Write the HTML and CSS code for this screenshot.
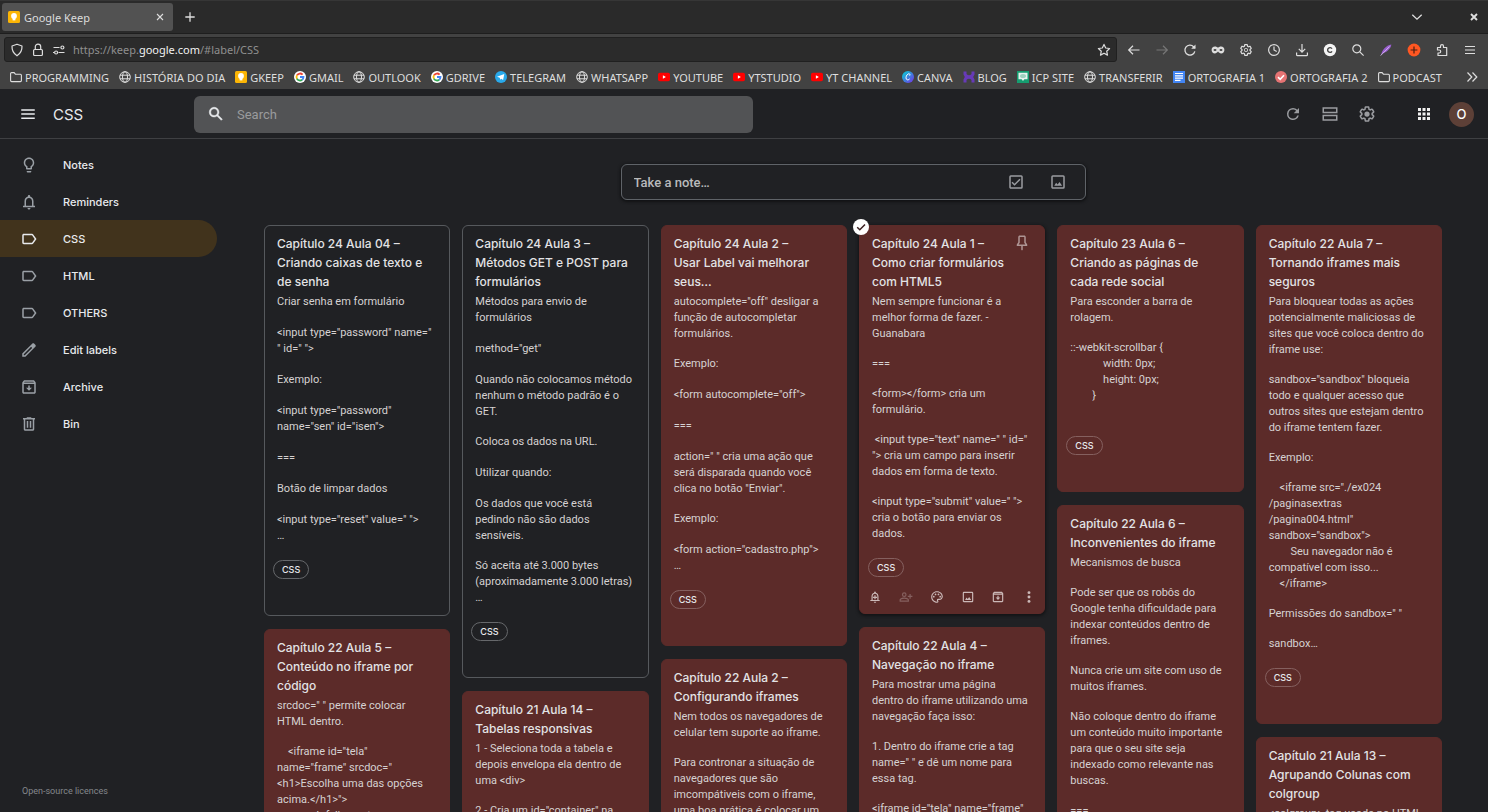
FILE: index.html
```html
<!DOCTYPE html>
<html lang="en">
<head>
<meta charset="utf-8">
<title>Google Keep</title>
<link rel="stylesheet" href="styles.css">
</head>
<body>
<svg class="sprite" aria-hidden="true">
  <symbol id="i-keep" viewBox="0 0 12 12"><rect width="12" height="12" rx="1.5" fill="#fbb505"/><circle cx="6" cy="5" r="2.9" fill="#fff"/><path d="M4.6 7h2.8v2.4H4.6z" fill="#fff"/></symbol>
  <symbol id="i-globe" viewBox="0 0 12 12"><g fill="none" stroke="currentColor"><circle cx="6" cy="6" r="5.3"/><ellipse cx="6" cy="6" rx="2.5" ry="5.3"/><path d="M1 4.2h10M1 7.8h10"/></g></symbol>
  <symbol id="i-folder" viewBox="0 0 12 12"><path d="M.6 9.6v-7q0-1 1-1h2.5l1.3 1.6h5q1 0 1 1v5.4q0 1-1 1H1.6q-1 0-1-1z" fill="none" stroke="currentColor" stroke-width="1.1"/></symbol>
  <symbol id="i-google" viewBox="0 0 12 12"><circle cx="6" cy="6" r="6" fill="#fff"/><g fill="none" stroke-width="1.8"><path d="M8.6 3.6A3.5 3.5 0 0 0 3 4.3" stroke="#ea4335"/><path d="M3 4.2a3.5 3.5 0 0 0 0 3.6" stroke="#fbbc05"/><path d="M2.9 7.6a3.5 3.5 0 0 0 5.3 1.1" stroke="#34a853"/><path d="M8.1 8.8A3.4 3.4 0 0 0 9.5 6H6" stroke="#4285f4"/></g></symbol>
  <symbol id="i-telegram" viewBox="0 0 12 12"><circle cx="6" cy="6" r="6" fill="#29a9ea"/><path d="M2 5.8 9.3 3 8.1 9 6.2 7.7l-1 1-.4-2z" fill="#fff"/></symbol>
  <symbol id="i-youtube" viewBox="0 0 12 12"><rect y="1.8" width="12" height="8.4" rx="1.8" fill="#f00"/><path d="m4.9 4.2 3 1.8-3 1.8z" fill="#fff"/></symbol>
  <symbol id="i-canva" viewBox="0 0 12 12"><defs><linearGradient id="cv" x1="0" y1="0" x2="1" y2="1"><stop offset=".2" stop-color="#17b8d8"/><stop offset="1" stop-color="#7a2be8"/></linearGradient></defs><circle cx="6" cy="6" r="6" fill="url(#cv)"/><path d="M7.7 4.6c.8-1.2-.2-2.2-1.4-1.7C4.5 3.6 3.5 6.5 4.3 8.1c.7 1.3 2.4.9 3.4-.3" fill="none" stroke="#fff" stroke-width="1"/></symbol>
  <symbol id="i-blog" viewBox="0 0 12 12"><path d="M.5.5h3v2.400c1.300 1.700 3.700 1.700 5 0V.5h3v3L10.200 6l1.300 2.500v3h-3V9.100c-1.300-1.700-3.700-1.700-5 0v2.400h-3v-3L1.800 6 .5 3.500z" fill="#673ab7"/></symbol>
  <symbol id="i-icp" viewBox="0 0 12 12"><path d="M0 0h12v12H0z" fill="#159d70"/><path d="M1.5 1.800h9v6.400H7.400L6 10 4.600 8.200H1.500z" fill="#e6f3ee"/><ellipse cx="6" cy="5" rx="3" ry="2" fill="#9dd2bf"/></symbol>
  <symbol id="i-docs" viewBox="0 0 12 12"><path d="M0 0h12v12H0z" fill="#4285f4"/><path d="M2 2.500h8M2 4.800h8M2 7.100h8M2 9.400h5.500" stroke="#fff" stroke-width="1.200"/></symbol>
  <symbol id="i-tick" viewBox="0 0 12 12"><circle cx="6" cy="6" r="6" fill="#e57373"/><path d="m3 6.200 2.200 2.100L9 4.200" fill="none" stroke="#fff" stroke-width="1.600"/></symbol>

  <symbol id="b-shield" viewBox="0 0 14 14"><path d="M7 1.200 12 3q.3 6.300-5 9.800Q1.700 9.300 2 3z" fill="none" stroke="currentColor" stroke-width="1.200" stroke-linejoin="round"/></symbol>
  <symbol id="b-lock" viewBox="0 0 14 14"><g fill="none" stroke="currentColor" stroke-width="1.200"><rect x="2.600" y="6.500" width="8.800" height="6" rx="1"/><path d="M4.300 6.500V3.800a2.700 2.700 0 0 1 5.400 0v2.700"/></g></symbol>
  <symbol id="b-perm" viewBox="0 0 14 14"><g fill="none" stroke="currentColor" stroke-width="1.200"><path d="M1.500 4.500h6M6.500 9.500h6M1 9.500h1"/><circle cx="10.400" cy="4.500" r="1.500"/><circle cx="4.100" cy="9.500" r="1.500"/></g></symbol>
  <symbol id="b-star" viewBox="0 0 14 14"><path d="m7 1.400 1.700 3.600 3.900.5-2.900 2.700.8 3.900L7 10.200l-3.500 1.900.8-3.900L1.400 5.500 5.300 5z" fill="none" stroke="currentColor" stroke-width="1.200" stroke-linejoin="round"/></symbol>
  <symbol id="b-back" viewBox="0 0 14 14"><path d="M12.500 7h-11M6 2.800 1.700 7 6 11.200" fill="none" stroke="currentColor" stroke-width="1.200"/></symbol>
  <symbol id="b-fwd" viewBox="0 0 14 14"><path d="M1.500 7h11M8 2.800 12.300 7 8 11.200" fill="none" stroke="currentColor" stroke-width="1.200"/></symbol>
  <symbol id="b-reload" viewBox="0 0 14 14"><path d="M11.800 8.300A5 5 0 1 1 10.600 3.700L12 5" fill="none" stroke="currentColor" stroke-width="1.300"/><path d="M12.500 1.500v4.300H8.200z" fill="currentColor"/></symbol>
  <symbol id="b-mask" viewBox="0 0 14 14"><path d="M4 3.600c1.300 0 2.200.6 3 1.200.8-.6 1.700-1.200 3-1.200 2.200 0 3.400 1.500 3.400 3.400S12 10.400 10.200 10.400c-1.400 0-2.400-.8-3.200-1.800-.8 1-1.800 1.800-3.200 1.800C2 10.400.6 8.900.6 7S1.800 3.600 4 3.600z" fill="currentColor"/><ellipse cx="4" cy="7" rx="1.500" ry="1.100" fill="#424242"/><ellipse cx="10" cy="7" rx="1.500" ry="1.100" fill="#424242"/></symbol>
  <symbol id="b-clock" viewBox="0 0 14 14"><g fill="none" stroke="currentColor" stroke-width="1.200"><circle cx="7" cy="7" r="5.400"/><path d="M7 3.500V7l2.700 1.600"/></g></symbol>
  <symbol id="b-down" viewBox="0 0 14 14"><path d="M7 1v8M3.800 5.900 7 9.100l3.200-3.200M1.600 9.500v2.200q0 .9.900.9h9q.9 0 .9-.9V9.500" fill="none" stroke="currentColor" stroke-width="1.200"/></symbol>
  <symbol id="b-c" viewBox="0 0 14 14"><circle cx="7" cy="7" r="6.200" fill="#f4f4f4"/><path d="M9 5.600a2.400 2.400 0 1 0 0 2.800" fill="none" stroke="#424242" stroke-width="1.400"/></symbol>
  <symbol id="b-search" viewBox="0 0 14 14"><g fill="none" stroke="currentColor" stroke-width="1.200"><circle cx="5.800" cy="5.800" r="4"/><path d="m8.800 8.800 3.800 3.800"/></g></symbol>
  <symbol id="b-feather" viewBox="0 0 14 14"><path d="M2 12.500C3 7 7 2.500 12.300 1.500 12 6 7 9.500 3.500 10.500z" fill="#9a5fd0"/><path d="M1.600 12.600 10.500 3.500" stroke="#ddc5f2" stroke-width=".8"/></symbol>
  <symbol id="b-plus" viewBox="0 0 14 14"><circle cx="7" cy="7" r="6.400" fill="#ff5722"/><path d="M7 3.600v6.800M3.600 7h6.800" stroke="#4a1e12" stroke-width="1.200"/></symbol>
  <symbol id="b-ext" viewBox="0 0 14 14"><path d="M2.500 4.500h3V3.200a1.500 1.500 0 0 1 3 0v1.300h3.200v8H3V10h1.200a1.500 1.500 0 0 0 0-3H2.500z" fill="none" stroke="currentColor" stroke-width="1.200" stroke-linejoin="round"/></symbol>
  <symbol id="b-menu" viewBox="0 0 14 14"><path d="M2 3.500h10M2 7h10M2 10.500h10" stroke="currentColor" stroke-width="1.200"/></symbol>
  <symbol id="b-chev" viewBox="0 0 14 14"><path d="m2.300 4.800 4.700 4.400 4.700-4.400" fill="none" stroke="currentColor" stroke-width="1.300"/></symbol>
  <symbol id="b-x" viewBox="0 0 14 14"><path d="m4 4 6 6m0-6-6 6" stroke="currentColor" stroke-width="1.900"/></symbol>
  <symbol id="b-xt" viewBox="0 0 14 14"><path d="m4 4 6 6m0-6-6 6" stroke="currentColor" stroke-width="1.100"/></symbol>
  <symbol id="b-add" viewBox="0 0 14 14"><path d="M7 2.300v9.400M2.300 7h9.400" stroke="currentColor" stroke-width="1.300"/></symbol>
  <symbol id="b-more" viewBox="0 0 14 14"><path d="m2.500 2.500 4.300 4.500-4.300 4.500m5-9 4.300 4.500-4.300 4.500" fill="none" stroke="currentColor" stroke-width="1.200"/></symbol>

  <symbol id="k-menu" viewBox="0 0 24 24"><path d="M3 5.500h18v2H3zm0 5.500h18v2H3zm0 5.500h18v2H3z"/></symbol>
  <symbol id="k-search" viewBox="0 0 24 24"><path d="M20.490 19l-5.730-5.730C15.530 12.200 16 10.910 16 9.500 16 5.910 13.090 3 9.500 3S3 5.910 3 9.500 5.910 16 9.500 16c1.410 0 2.700-.47 3.770-1.240L19 20.490 20.490 19zM5 9.500C5 7.010 7.010 5 9.500 5S14 7.010 14 9.500 11.990 14 9.500 14 5 11.990 5 9.500z" stroke="currentColor" stroke-width=".6"/></symbol>
  <symbol id="k-refresh" viewBox="0 0 24 24"><path d="M17.650 6.350A7.950 7.950 0 0 0 12 4a8 8 0 1 0 7.730 10h-2.080A6 6 0 1 1 12 6c1.660 0 3.140.69 4.220 1.780L13 11h7V4l-2.350 2.350z"/></symbol>
  <symbol id="k-view" viewBox="0 0 24 24"><path d="M2 3h20v8H2zm2 2v4h16V5zM2 13h20v8H2zm2 2v4h16v-4z" fill-rule="evenodd"/></symbol>
  <symbol id="k-gear" viewBox="0 0 24 24"><path d="M13.850 22.250h-3.700c-.74 0-1.360-.54-1.450-1.270l-.27-1.890c-.27-.14-.53-.29-.79-.46l-1.800.72c-.7.26-1.470-.03-1.810-.65L2.200 15.530c-.35-.66-.2-1.440.36-1.880l1.530-1.190c-.01-.15-.02-.3-.02-.46 0-.15.01-.31.02-.46l-1.520-1.190c-.59-.45-.74-1.260-.37-1.880l1.850-3.190c.34-.62 1.110-.9 1.790-.63l1.810.73c.26-.17.52-.32.78-.46l.27-1.910c.09-.7.71-1.250 1.440-1.250h3.700c.74 0 1.360.54 1.450 1.270l.27 1.890c.27.14.53.29.79.46l1.800-.72c.71-.26 1.480.03 1.820.65l1.840 3.180c.36.66.2 1.440-.36 1.880l-1.520 1.190c.01.15.02.3.02.46s-.01.31-.02.46l1.520 1.190c.56.45.72 1.230.37 1.860l-1.860 3.220c-.34.62-1.110.9-1.800.63l-1.800-.72c-.26.17-.52.32-.78.46l-.27 1.910c-.1.68-.72 1.220-1.460 1.220zm-3.230-2h2.760l.37-2.550.53-.22c.44-.18.88-.44 1.340-.78l.45-.34 2.380.96 1.380-2.400-2.030-1.580.07-.56c.03-.26.06-.51.06-.78s-.03-.53-.06-.78l-.07-.56 2.030-1.580-1.390-2.400-2.390.96-.45-.35c-.42-.32-.87-.58-1.330-.77l-.52-.22-.37-2.550h-2.760l-.37 2.550-.53.21c-.44.19-.88.44-1.340.79l-.45.33-2.380-.95-1.390 2.390 2.030 1.580-.07.56a7 7 0 0 0-.06.79c0 .26.02.53.06.78l.07.56-2.030 1.580 1.380 2.400 2.390-.96.45.35c.43.33.86.58 1.330.77l.53.22.38 2.550z"/><circle cx="12" cy="12" r="3.500"/></symbol>
  <symbol id="b-gear" viewBox="0 0 24 24"><use href="#k-gear"/><circle cx="12" cy="12" r="2" fill="#424242"/></symbol>
  <symbol id="k-apps" viewBox="0 0 24 24"><path d="M4 4h4v4H4zm6 0h4v4h-4zm6 0h4v4h-4zM4 10h4v4H4zm6 0h4v4h-4zm6 0h4v4h-4zM4 16h4v4H4zm6 0h4v4h-4zm6 0h4v4h-4z"/></symbol>
  <symbol id="k-bulb" viewBox="0 0 24 24"><path d="M9 21c0 .5.4 1 1 1h4c.6 0 1-.5 1-1v-1H9v1zm3-19C8.100 2 5 5.100 5 9c0 2.400 1.200 4.500 3 5.700V17c0 .5.4 1 1 1h6c.6 0 1-.5 1-1v-2.300c1.800-1.300 3-3.400 3-5.700 0-3.900-3.100-7-7-7zm2.900 11.100l-.9.6V16h-4v-2.300l-.9-.6C7.800 12.200 7 10.600 7 9c0-2.800 2.200-5 5-5s5 2.200 5 5c0 1.600-.8 3.200-2.100 4.100z"/></symbol>
  <symbol id="k-bell" viewBox="0 0 24 24"><path d="M18 17v-6c0-3.070-1.630-5.640-4.500-6.320V4c0-.83-.67-1.500-1.500-1.500s-1.500.67-1.500 1.500v.68C7.640 5.360 6 7.920 6 11v6H4v2h16v-2h-2zm-2 0H8v-6c0-2.480 1.510-4.500 4-4.500s4 2.020 4 4.500v6zm-4 5c1.100 0 2-.9 2-2h-4c0 1.100.9 2 2 2z"/></symbol>
  <symbol id="k-belladd" viewBox="0 0 24 24"><use href="#k-bell"/><path d="M11 9h2v2.500h2.500v2H13V16h-2v-2.500H8.500v-2H11z"/></symbol>
  <symbol id="k-label" viewBox="0 0 24 24"><path d="M17.630 5.840C17.270 5.330 16.670 5 16 5L5 5.010C3.900 5.010 3 5.900 3 7v10c0 1.100.9 1.990 2 1.990L16 19c.67 0 1.270-.33 1.630-.84L22 12l-4.370-6.160zM16 17H5V7h11l3.550 5L16 17z"/></symbol>
  <symbol id="k-edit" viewBox="0 0 24 24"><path d="M20.410 4.940l-1.350-1.350c-.78-.78-2.050-.78-2.830 0L3 16.820V21h4.180L20.410 7.770c.79-.78.79-2.050 0-2.830zm-14 14.120L5 19v-1.360l9.820-9.820 1.410 1.410-9.820 9.830z"/></symbol>
  <symbol id="k-archive" viewBox="0 0 24 24"><path d="M20.540 5.230l-1.390-1.680C18.880 3.210 18.470 3 18 3H6c-.47 0-.88.21-1.160.55L3.460 5.230C3.170 5.570 3 6.020 3 6.500V19c0 1.100.9 2 2 2h14c1.100 0 2-.9 2-2V6.500c0-.48-.17-.93-.46-1.270zM6.240 5h11.520l.83 1H5.420l.82-1zM5 19V8h14v11H5zm8-9h-2v3H8l4 4 4-4h-3z"/></symbol>
  <symbol id="k-bin" viewBox="0 0 24 24"><path d="M15 4V3H9v1H4v2h1v13c0 1.100.9 2 2 2h10c1.100 0 2-.9 2-2V6h1V4h-5zm2 15H7V6h10v13zM9 8h2v9H9zm4 0h2v9h-2z"/></symbol>
  <symbol id="k-check" viewBox="0 0 24 24"><path d="M19 3H5a2 2 0 0 0-2 2v14c0 1.100.9 2 2 2h14a2 2 0 0 0 2-2V5a2 2 0 0 0-2-2zm0 16H5V5h14v14zM18 9l-1.400-1.400-6.600 6.600-2.600-2.600L6 13l4 4z"/></symbol>
  <symbol id="k-image" viewBox="0 0 24 24"><path d="M19 3H5a2 2 0 0 0-2 2v14c0 1.100.9 2 2 2h14a2 2 0 0 0 2-2V5a2 2 0 0 0-2-2zm0 16H5V5h14v14zm-5-7-2.500 3.300L9.500 13 7 17h10.500z"/></symbol>
  <symbol id="k-pin" viewBox="0 0 24 24"><path d="M17 4v7l2 3v2h-6v5l-1 1-1-1v-5H5v-2l2-3V4c0-1.100.9-2 2-2h6c1.110 0 2 .89 2 2zM9 4v7.750L7.500 14h9L15 11.750V4H9z"/></symbol>
  <symbol id="k-person" viewBox="0 0 24 24"><path d="M9 12a4 4 0 1 0 0-8 4 4 0 0 0 0 8zm0-6a2 2 0 1 1 0 4 2 2 0 0 1 0-4zm0 7c-2.700 0-8 1.300-8 4v3h16v-3c0-2.700-5.300-4-8-4zm6 5H3v-1c0-.6 3-2 6-2s6 1.400 6 2zm5-8V7h-2v3h-3v2h3v3h2v-3h3v-2z"/></symbol>
  <symbol id="k-palette" viewBox="0 0 24 24"><path d="M12 22C6.490 22 2 17.510 2 12S6.490 2 12 2s10 4.040 10 9c0 3.310-2.690 6-6 6h-1.770c-.28 0-.5.22-.5.5 0 .12.05.23.13.33.41.47.64 1.060.64 1.670A2.500 2.500 0 0 1 12 22zm0-18c-4.410 0-8 3.590-8 8s3.590 8 8 8c.28 0 .5-.22.5-.5a.54.54 0 0 0-.14-.35c-.41-.46-.63-1.050-.63-1.650a2.500 2.500 0 0 1 2.500-2.500H16c2.210 0 4-1.790 4-4 0-3.860-3.590-7-8-7z"/><circle cx="6.500" cy="11.500" r="1.500"/><circle cx="9.500" cy="7.500" r="1.500"/><circle cx="14.500" cy="7.500" r="1.500"/><circle cx="17.500" cy="11.500" r="1.500"/></symbol>
  <symbol id="k-more" viewBox="0 0 24 24"><circle cx="12" cy="4.500" r="2.500"/><circle cx="12" cy="12" r="2.500"/><circle cx="12" cy="19.500" r="2.500"/></symbol>
  <symbol id="k-selected" viewBox="0 0 16 16"><circle cx="8" cy="8" r="8" fill="#fff"/><path d="m4.200 8.300 2.600 2.500 5.200-5.300" fill="none" stroke="#3b2020" stroke-width="1.500"/></symbol>
</svg>

<div class="window">
  <div class="tabbar">
    <div class="tab">
      <svg class="icon12"><use href="#i-keep"/></svg>
      <span class="tab-title">Google Keep</span>
      <button class="ghost" aria-label="Close tab"><svg class="icon14"><use href="#b-xt"/></svg></button>
    </div>
    <button class="ghost newtab" aria-label="New tab"><svg class="icon14"><use href="#b-add"/></svg></button>
    <button class="ghost list-tabs" aria-label="List tabs"><svg class="icon14"><use href="#b-chev"/></svg></button>
    <button class="ghost close-window" aria-label="Close window"><svg class="icon14"><use href="#b-x"/></svg></button>
  </div>

  <div class="toolbar">
    <div class="urlbar">
      <svg class="icon14"><use href="#b-shield"/></svg>
      <svg class="icon14"><use href="#b-lock"/></svg>
      <svg class="icon14"><use href="#b-perm"/></svg>
      <div class="url" role="textbox" aria-label="Address">https://keep.<span class="domain">google.com</span>/#label/CSS</div>
      <button class="ghost" aria-label="Bookmark"><svg class="icon14"><use href="#b-star"/></svg></button>
    </div>
    <div class="tools">
      <button class="ghost" aria-label="Back"><svg class="icon14"><use href="#b-back"/></svg></button>
      <button class="ghost dim" aria-label="Forward"><svg class="icon14"><use href="#b-fwd"/></svg></button>
      <button class="ghost" aria-label="Reload"><svg class="icon14"><use href="#b-reload"/></svg></button>
      <button class="ghost" aria-label="Private"><svg class="icon14"><use href="#b-mask"/></svg></button>
      <button class="ghost" aria-label="Settings"><svg class="icon14"><use href="#b-gear"/></svg></button>
      <button class="ghost" aria-label="History"><svg class="icon14"><use href="#b-clock"/></svg></button>
      <button class="ghost" aria-label="Downloads"><svg class="icon14"><use href="#b-down"/></svg></button>
      <button class="ghost" aria-label="Account"><svg class="icon14"><use href="#b-c"/></svg></button>
      <button class="ghost" aria-label="Find"><svg class="icon14"><use href="#b-search"/></svg></button>
      <button class="ghost" aria-label="Feather"><svg class="icon14"><use href="#b-feather"/></svg></button>
      <button class="ghost" aria-label="Add"><svg class="icon14"><use href="#b-plus"/></svg></button>
      <button class="ghost" aria-label="Extensions"><svg class="icon14"><use href="#b-ext"/></svg></button>
      <button class="ghost" aria-label="Menu"><svg class="icon14"><use href="#b-menu"/></svg></button>
    </div>
  </div>

  <nav class="bookmarks" aria-label="Bookmarks">
    <a href="#"><svg class="icon12"><use href="#i-folder"/></svg>PROGRAMMING</a>
    <a href="#"><svg class="icon12"><use href="#i-globe"/></svg>HISTÓRIA DO DIA</a>
    <a href="#"><svg class="icon12"><use href="#i-keep"/></svg>GKEEP</a>
    <a href="#"><svg class="icon12"><use href="#i-google"/></svg>GMAIL</a>
    <a href="#"><svg class="icon12"><use href="#i-globe"/></svg>OUTLOOK</a>
    <a href="#"><svg class="icon12"><use href="#i-google"/></svg>GDRIVE</a>
    <a href="#"><svg class="icon12"><use href="#i-telegram"/></svg>TELEGRAM</a>
    <a href="#"><svg class="icon12"><use href="#i-globe"/></svg>WHATSAPP</a>
    <a href="#"><svg class="icon12"><use href="#i-youtube"/></svg>YOUTUBE</a>
    <a href="#"><svg class="icon12"><use href="#i-youtube"/></svg>YTSTUDIO</a>
    <a href="#"><svg class="icon12"><use href="#i-youtube"/></svg>YT CHANNEL</a>
    <a href="#"><svg class="icon12"><use href="#i-canva"/></svg>CANVA</a>
    <a href="#"><svg class="icon12"><use href="#i-blog"/></svg>BLOG</a>
    <a href="#"><svg class="icon12"><use href="#i-icp"/></svg>ICP SITE</a>
    <a href="#"><svg class="icon12"><use href="#i-globe"/></svg>TRANSFERIR</a>
    <a href="#"><svg class="icon12"><use href="#i-docs"/></svg>ORTOGRAFIA 1</a>
    <a href="#"><svg class="icon12"><use href="#i-tick"/></svg>ORTOGRAFIA 2</a>
    <a href="#"><svg class="icon12"><use href="#i-folder"/></svg>PODCAST</a>
    <button class="ghost overflow" aria-label="More bookmarks"><svg class="icon14"><use href="#b-more"/></svg></button>
  </nav>

  <header class="appbar">
    <div class="brand">
      <button class="ghost" aria-label="Main menu"><svg class="icon18"><use href="#k-menu"/></svg></button>
      <h1>CSS</h1>
    </div>
    <label class="search">
      <svg class="icon18"><use href="#k-search"/></svg>
      <input type="text" placeholder="Search" aria-label="Search">
    </label>
    <div class="actions">
      <button class="ghost" aria-label="Refresh"><svg class="icon18"><use href="#k-refresh"/></svg></button>
      <button class="ghost" aria-label="List view"><svg class="icon18"><use href="#k-view"/></svg></button>
      <button class="ghost" aria-label="Settings"><svg class="icon18"><use href="#k-gear"/></svg></button>
      <button class="ghost apps" aria-label="Google apps"><svg class="icon18"><use href="#k-apps"/></svg></button>
      <button class="avatar" aria-label="Account">O</button>
    </div>
  </header>

  <div class="page">
    <aside class="sidebar">
      <nav aria-label="Labels">
        <a href="#"><svg class="icon18"><use href="#k-bulb"/></svg>Notes</a>
        <a href="#"><svg class="icon18"><use href="#k-bell"/></svg>Reminders</a>
        <a href="#" class="active"><svg class="icon18"><use href="#k-label"/></svg>CSS</a>
        <a href="#"><svg class="icon18"><use href="#k-label"/></svg>HTML</a>
        <a href="#"><svg class="icon18"><use href="#k-label"/></svg>OTHERS</a>
        <a href="#"><svg class="icon18"><use href="#k-edit"/></svg>Edit labels</a>
        <a href="#"><svg class="icon18"><use href="#k-archive"/></svg>Archive</a>
        <a href="#"><svg class="icon18"><use href="#k-bin"/></svg>Bin</a>
      </nav>
      <a href="#" class="licences">Open-source licences</a>
    </aside>

    <main class="main">
      <div class="composer">
        <input type="text" placeholder="Take a note…" aria-label="Take a note">
        <button class="ghost" aria-label="New list"><svg class="icon18"><use href="#k-check"/></svg></button>
        <button class="ghost" aria-label="New note with image"><svg class="icon18"><use href="#k-image"/></svg></button>
      </div>

      <div class="board">
        <div class="column">
          <article class="note">
            <h2>Capítulo 24 Aula 04 –
Criando caixas de texto e
de senha</h2>
            <div class="body">
              <p>Criar senha em formulário</p>
              <p>&lt;input type="password" name="
" id=" "&gt;</p>
              <p>Exemplo:</p>
              <p>&lt;input type="password"
name="sen" id="isen"&gt;</p>
              <p>===</p>
              <p>Botão de limpar dados</p>
              <p>&lt;input type="reset" value=" "&gt;
…</p>
            </div>
            <a href="#" class="chip">CSS</a>
            <div class="note-tools"></div>
          </article>
          <article class="note red">
            <h2>Capítulo 22 Aula 5 –
Conteúdo no iframe por
código</h2>
            <div class="body tight">
              <p>srcdoc=" " permite colocar
HTML dentro.</p>
              <p>    &lt;iframe id="tela"
name="frame" srcdoc="
&lt;h1&gt;Escolha uma das opções
acima.&lt;/h1&gt;"&gt;
        &lt;p&gt;Infelizmente seu</p>
            </div>
          </article>
        </div>

        <div class="column">
          <article class="note">
            <h2>Capítulo 24 Aula 3 –
Métodos GET e POST para
formulários</h2>
            <div class="body">
              <p>Métodos para envio de
formulários</p>
              <p>method="get"</p>
              <p class="long">Quando não colocamos método
nenhum o método padrão é o
GET.</p>
              <p>Coloca os dados na URL.</p>
              <p>Utilizar quando:</p>
              <p class="long">Os dados que você está
pedindo não são dados
sensíveis.</p>
              <p>Só aceita até 3.000 bytes
(aproximadamente 3.000 letras)
…</p>
            </div>
            <a href="#" class="chip">CSS</a>
            <div class="note-tools"></div>
          </article>
          <article class="note red">
            <h2>Capítulo 21 Aula 14 –
Tabelas responsivas</h2>
            <div class="body tight">
              <p>1 - Seleciona toda a tabela e
depois envelopa ela dentro de
uma &lt;div&gt;</p>
              <p>2 - Cria um id="container" na</p>
            </div>
          </article>
        </div>

        <div class="column">
          <article class="note red">
            <h2>Capítulo 24 Aula 2 –
Usar Label vai melhorar
seus…</h2>
            <div class="body">
              <p class="long">autocomplete="off" desligar a
função de autocompletar
formulários.</p>
              <p>Exemplo:</p>
              <p>&lt;form autocomplete="off"&gt;</p>
              <p>===</p>
              <p class="long">action=" " cria uma ação que
será disparada quando você
clica no botão "Enviar".</p>
              <p>Exemplo:</p>
              <p>&lt;form action="cadastro.php"&gt;
…</p>
            </div>
            <a href="#" class="chip">CSS</a>
            <div class="note-tools"></div>
          </article>
          <article class="note red">
            <h2>Capítulo 22 Aula 2 –
Configurando iframes</h2>
            <div class="body tight">
              <p>Nem todos os navegadores de
celular tem suporte ao iframe.</p>
              <p>Para contronar a situação de
navegadores que são
imcompátiveis com o iframe,
uma boa prática é colocar um</p>
            </div>
          </article>
        </div>

        <div class="column">
          <article class="note red selected">
            <svg class="mark" role="img" aria-label="Selected"><use href="#k-selected"/></svg>
            <button class="ghost pin" aria-label="Pin note"><svg class="icon18"><use href="#k-pin"/></svg></button>
            <h2>Capítulo 24 Aula 1 –
Como criar formulários
com HTML5</h2>
            <div class="body tight">
              <p>Nem sempre funcionar é a
melhor forma de fazer. -
Guanabara</p>
              <p>===</p>
              <p>&lt;form&gt;&lt;/form&gt; cria um
formulário.</p>
              <p> &lt;input type="text" name=" " id="
"&gt; cria um campo para inserir
dados em forma de texto.</p>
              <p>&lt;input type="submit" value=" "&gt;
cria o botão para enviar os
dados.</p>
            </div>
            <a href="#" class="chip">CSS</a>
            <div class="note-tools">
              <button class="ghost" aria-label="Remind me"><svg class="icon14"><use href="#k-belladd"/></svg></button>
              <button class="ghost off" aria-label="Collaborator"><svg class="icon14"><use href="#k-person"/></svg></button>
              <button class="ghost" aria-label="Background"><svg class="icon14"><use href="#k-palette"/></svg></button>
              <button class="ghost" aria-label="Add image"><svg class="icon14"><use href="#k-image"/></svg></button>
              <button class="ghost" aria-label="Archive"><svg class="icon14"><use href="#k-archive"/></svg></button>
              <button class="ghost" aria-label="More"><svg class="icon14"><use href="#k-more"/></svg></button>
            </div>
          </article>
          <article class="note red">
            <h2>Capítulo 22 Aula 4 –
Navegação no iframe</h2>
            <div class="body tight">
              <p>Para mostrar uma página
dentro do iframe utilizando uma
navegação faça isso:</p>
              <p>1. Dentro do iframe crie a tag
name=" " e dê um nome para
essa tag.</p>
              <p>&lt;iframe id="tela" name="frame"</p>
            </div>
          </article>
        </div>

        <div class="column">
          <article class="note red">
            <h2>Capítulo 23 Aula 6 –
Criando as páginas de
cada rede social</h2>
            <div class="body tight">
              <p>Para esconder a barra de
rolagem.</p>
              <p>::-webkit-scrollbar {
            width: 0px;
            height: 0px;
        }

</p>
            </div>
            <a href="#" class="chip">CSS</a>
            <div class="note-tools"></div>
          </article>
          <article class="note red">
            <h2>Capítulo 22 Aula 6 –
Inconvenientes do iframe</h2>
            <div class="body tight">
              <p>Mecanismos de busca</p>
              <p>Pode ser que os robôs do
Google tenha dificuldade para
indexar conteúdos dentro de
iframes.</p>
              <p>Nunca crie um site com uso de
muitos iframes.</p>
              <p>Não coloque dentro do iframe
um conteúdo muito importante
para que o seu site seja
indexado como relevante nas
buscas.</p>
              <p>===</p>
            </div>
          </article>
        </div>

        <div class="column">
          <article class="note red">
            <h2>Capítulo 22 Aula 7 –
Tornando iframes mais
seguros</h2>
            <div class="body tight">
              <p>Para bloquear todas as ações
potencialmente maliciosas de
sites que você coloca dentro do
iframe use:</p>
              <p>sandbox="sandbox" bloqueia
todo e qualquer acesso que
outros sites que estejam dentro
do iframe tentem fazer.</p>
              <p>Exemplo:</p>
              <p>    &lt;iframe src="./ex024
/paginasextras
/pagina004.html"
sandbox="sandbox"&gt;
        Seu navegador não é
compatível com isso...
    &lt;/iframe&gt;</p>
              <p>Permissões do sandbox=" "</p>
              <p>sandbox…</p>
            </div>
            <a href="#" class="chip">CSS</a>
            <div class="note-tools"></div>
          </article>
          <article class="note red">
            <h2>Capítulo 21 Aula 13 –
Agrupando Colunas com
colgroup</h2>
            <div class="body tight">
              <p>&lt;colgroup&gt; tag usada no HTML</p>
            </div>
          </article>
        </div>
      </div>
    </main>
  </div>
</div>
</body>
</html>
```
FILE: styles.css
```css
* { box-sizing: border-box; }

body {
  margin: 0;
  background: #202124;
  color: #e8eaed;
  font-family: Roboto, "Liberation Sans", sans-serif;
  font-size: 11px;
}

a { color: inherit; text-decoration: none; }

.sprite { position: absolute; width: 0; height: 0; }

svg { display: block; flex: none; fill: currentColor; }
.icon12 { width: 12px; height: 12px; }
.icon14 { width: 14px; height: 14px; }
.icon18 { width: 18px; height: 18px; }

.ghost {
  display: grid;
  place-items: center;
  padding: 0;
  border: 0;
  background: none;
  color: inherit;
}

.window {
  display: flex;
  flex-direction: column;
  height: 100vh;
  overflow: hidden;
}

/* Browser chrome */
.tabbar,
.toolbar,
.bookmarks {
  display: flex;
  align-items: center;
  flex: none;
  color: #dedede;
  font-family: "Noto Sans", sans-serif;
  font-size: 11px;
}

.tabbar {
  height: 34px;
  background: #2a2a2a;
  border-top: 1px solid #363636;
  border-bottom: 1px solid #1e1e1e;
  padding: 0 7px 0 2px;
}

.tab {
  display: flex;
  align-items: center;
  gap: 4px;
  width: 171px;
  height: 28px;
  padding: 0 6px;
  border-radius: 3px;
  background: #525252;
}

.tab-title { flex: 1; color: #dcdcdc; }
.newtab { margin-left: 10px; }
.list-tabs { margin-left: auto; }
.close-window { margin-left: 43px; }

.toolbar {
  height: 31px;
  padding: 0 4px;
  gap: 3px;
  background: #424242;
}

.urlbar {
  display: flex;
  align-items: center;
  flex: 1;
  gap: 7px;
  height: 25px;
  padding: 0 5px;
  border: 1px solid #202020;
  border-radius: 3px;
  background: #2b2b2b;
}

.url { flex: 1; color: #8f8f8f; }
.domain { color: #f2f2f2; }

.tools { display: flex; }
.tools .ghost { width: 28px; height: 26px; }
.tools .dim { color: #777; }

.bookmarks {
  height: 24px;
  gap: 10px;
  padding: 0 9px 0 10px;
  background: #424242;
  white-space: nowrap;
}

.bookmarks a { display: flex; align-items: center; gap: 3px; }
.overflow { margin-left: auto; }

/* App bar */
.appbar {
  display: flex;
  align-items: center;
  flex: none;
  height: 50px;
  padding: 1px 14px 0 0;
  border-bottom: 1px solid #3f4043;
}

.brand {
  display: flex;
  align-items: center;
  gap: 16px;
  width: 194px;
  padding-left: 19px;
}

.brand h1 {
  margin: 0;
  font: 400 15px Inter, sans-serif;
}

.search {
  display: flex;
  align-items: center;
  flex: 1;
  gap: 12px;
  max-width: 559px;
  height: 37px;
  padding: 0 13px;
  border-radius: 6px;
  background: #525355;
}

.search input,
.composer input {
  flex: 1;
  min-width: 0;
  padding: 0;
  border: 0;
  outline: 0;
  background: none;
  color: inherit;
  font: 400 13px Roboto, sans-serif;
}

.search input::placeholder { color: #9a9b9d; opacity: 1; }

.actions {
  display: flex;
  align-items: center;
  gap: 19px;
  margin-left: auto;
  color: #9a9ca0;
}

.apps { margin: 0 -3px 0 20px; color: #f1f1f1; }

.avatar {
  width: 25px;
  height: 25px;
  padding: 0;
  border: 0;
  border-radius: 50%;
  background: #5d4037;
  color: #fff;
  font: 500 13px Inter, sans-serif;
}

/* Page */
.page {
  display: flex;
  flex: 1;
  min-height: 0;
}

.sidebar {
  display: flex;
  flex-direction: column;
  justify-content: space-between;
  flex: none;
  width: 217px;
  padding: 7px 0 14px;
  font-family: Inter, sans-serif;
  font-weight: 500;
}

.sidebar nav a {
  display: flex;
  align-items: center;
  gap: 25px;
  height: 37px;
  padding-left: 20px;
  border-radius: 0 19px 19px 0;
}

.sidebar nav svg { color: #9aa0a6; }
.sidebar .active { background: #41331c; }
.sidebar .active svg { color: #e8eaed; }

.sidebar .licences {
  padding-left: 22px;
  color: #85888c;
  font: 400 9px/14px Roboto, sans-serif;
}

.main {
  flex: 1;
  min-width: 0;
  padding: 25px 46px 0 47px;
  overflow: hidden;
}

.composer {
  display: flex;
  align-items: center;
  gap: 24px;
  max-width: 465px;
  height: 36px;
  margin: 0 auto 25px;
  padding: 0 18px 0 12px;
  border: 1px solid #5f6368;
  border-radius: 6px;
  box-shadow: 0 1px 3px 1px #111214;
  color: #9a9ca0;
}

.composer input { font-weight: 500; }
.composer input::placeholder { color: #b9babc; opacity: 1; }

.board {
  display: grid;
  grid-template-columns: repeat(6, minmax(0, 1fr));
  gap: 12px;
}

.column {
  display: flex;
  flex-direction: column;
  gap: 13px;
}

.note {
  position: relative;
  padding: 8px 12px 0;
  border: 1px solid #56595d;
  border-radius: 6px;
}

.note.red { background: #5c2b29; border-color: #5c2b29; }
.note.selected { box-shadow: 0 1px 3px 1px #131416; }

.note h2 {
  margin: 0 0 3px;
  color: #e3e3e5;
  font: 500 12px/19px Inter, sans-serif;
  white-space: pre;
}

.body { color: #d6d2d2; }

.body p {
  margin: 0 0 15px;
  line-height: 16px;
  white-space: pre;
}

.body .long,
.body.tight p { margin-bottom: 14px; }

.body p:last-child,
.body.tight p:last-child { margin-bottom: 16px; }

.chip {
  display: inline-block;
  margin-left: -4px;
  padding: 0 8px;
  border: 1px solid #66686b;
  border-radius: 10px;
  font: 500 9px/17px Inter, sans-serif;
  vertical-align: top;
}

.red .chip { border-color: #85605f; }

.note-tools {
  display: flex;
  justify-content: space-between;
  align-items: center;
  height: 36px;
  padding-top: 3px;
  margin: 0 -4px;
  color: #cbb9b8;
}

.note-tools .off { color: #85605f; }

.mark {
  position: absolute;
  top: -7px;
  left: -7px;
  width: 16px;
  height: 16px;
}

.pin {
  position: absolute;
  top: 8px;
  right: 13px;
  color: #ae9594;
}
```
